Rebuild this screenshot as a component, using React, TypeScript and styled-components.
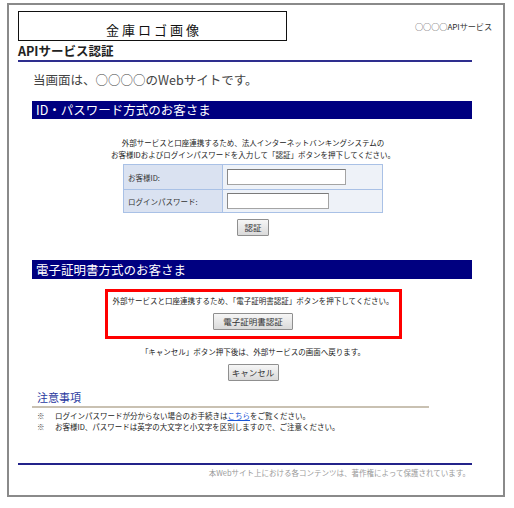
import React from 'react';
import styled, { createGlobalStyle } from 'styled-components';

const GlobalStyle = createGlobalStyle`
  html, body {
    margin: 0;
    padding: 0;
    background: #ffffff;
  }
  body {
    font-family: "Noto Sans CJK JP", "Liberation Sans", sans-serif;
    color: #222;
  }
`;

const App = () => {
  return (
    <>
      <GlobalStyle />
      <Frame>
        <TopRow>
          <LogoBox>金庫ロゴ画像</LogoBox>
          <ServiceName>○○○○APIサービス</ServiceName>
        </TopRow>
        <Main>
          <PageTitle>APIサービス認証</PageTitle>
          <Intro>当画面は、○○○○のWebサイトです。</Intro>

          <Section>
            <SectionBar>ID・パスワード方式のお客さま</SectionBar>
            <Body>
              <SmallText $top={18}>
                外部サービスと口座連携するため、法人インターネットバンキングシステムの
                <br />
                お客様IDおよびログインパスワードを入力して「認証」ボタンを押下してください。
              </SmallText>
              <LoginTable>
                <tbody>
                  <tr>
                    <LabelCell $h={25}>お客様ID:</LabelCell>
                    <InputCell>
                      <TextInput type="text" $w={119} />
                    </InputCell>
                  </tr>
                  <tr>
                    <LabelCell $h={23}>ログインパスワード:</LabelCell>
                    <InputCell>
                      <TextInput type="password" $w={102} />
                    </InputCell>
                  </tr>
                </tbody>
              </LoginTable>
              <Button $w={32} $top={6}>認証</Button>
            </Body>
          </Section>

          <Section $top={24}>
            <SectionBar $h={19}>電子証明書方式のお客さま</SectionBar>
            <Body>
              <Highlight>
                <SmallText>
                  外部サービスと口座連携するため、「電子証明書認証」ボタンを押下してください。
                </SmallText>
                <Button $w={80} $top={6}>電子証明書認証</Button>
              </Highlight>
              <SmallText $top={7}>
                「キャンセル」ボタン押下後は、外部サービスの画面へ戻ります。
              </SmallText>
              <Button $w={51} $top={6}>キャンセル</Button>
            </Body>
          </Section>

          <Notice>
            <NoticeTitle>注意事項</NoticeTitle>
            <NoteList>
              <NoteItem>
                <Mark>{'\u203B\uFE0E'}</Mark>
                <span>
                  ログインパスワードが分からない場合のお手続きは<NoteLink href="#">こちら</NoteLink>をご覧ください。
                </span>
              </NoteItem>
              <NoteItem>
                <Mark>{'\u203B\uFE0E'}</Mark>
                <span>お客様ID、パスワードは英字の大文字と小文字を区別しますので、ご注意ください。</span>
              </NoteItem>
            </NoteList>
          </Notice>

          <Footer>本Webサイト上における各コンテンツは、著作権によって保護されています。</Footer>
        </Main>
      </Frame>
    </>
  );
};

export default App;

const Frame = styled.div`
  box-sizing: border-box;
  width: 498px;
  height: 494px;
  margin: 3px 0 0 7px;
  border: 2px solid #8a8a8a;
  padding: 6px 11px 0 9px;
`;

const TopRow = styled.div`
  display: flex;
  justify-content: space-between;
  align-items: center;
`;

const LogoBox = styled.div`
  box-sizing: border-box;
  width: 269px;
  height: 30px;
  border: 1px solid #111;
  display: flex;
  align-items: center;
  justify-content: center;
  padding-top: 6px;
  padding-left: 3px;
  font-size: 13px;
  letter-spacing: 3px;
  color: #111;
`;

const ServiceName = styled.div`
  font-size: 8.2px;
  color: #333;
  letter-spacing: -0.1px;
`;

const Main = styled.div`
  width: 454px;
`;

const PageTitle = styled.div`
  margin-top: 1px;
  height: 18px;
  line-height: 18px;
  font-size: 12.5px;
  font-weight: bold;
  color: #222;
  border-bottom: 2px solid #2e2e8e;
`;

const Intro = styled.div`
  margin-top: 10px;
  padding-left: 15px;
  line-height: 16px;
  font-size: 12.5px;
  color: #444;
`;

const Section = styled.section<{ $top?: number }>`
  margin-top: ${({ $top }) => $top ?? 13}px;
  margin-left: 14px;
  width: 440px;
`;

const SectionBar = styled.div<{ $h?: number }>`
  height: ${({ $h }) => $h ?? 18}px;
  line-height: ${({ $h }) => $h ?? 18}px;
  background: #000080;
  color: #ffffff;
  font-size: 12.5px;
  padding-left: 4px;
`;

const Body = styled.div`
  display: flex;
  flex-direction: column;
  align-items: center;
  padding-left: 2px;
`;

const SmallText = styled.p<{ $top?: number }>`
  margin: ${({ $top }) => $top ?? 0}px 0 0;
  font-size: 7.5px;
  line-height: 12px;
  text-align: center;
  color: #222;
  white-space: nowrap;
`;

const LoginTable = styled.table`
  margin-top: 3px;
  width: 260px;
  border-collapse: collapse;
  border: 1px solid #a9c1e6;
`;

const LabelCell = styled.td<{ $h: number }>`
  box-sizing: border-box;
  width: 99px;
  height: ${({ $h }) => $h}px;
  padding: 0 0 0 4px;
  background: #dae2f1;
  border: 1px solid #a9c1e6;
  font-size: 7.5px;
  color: #333;
`;

const InputCell = styled.td`
  padding: 0 0 0 4px;
  background: #eef2f8;
  border: 1px solid #a9c1e6;
`;

const TextInput = styled.input<{ $w: number }>`
  display: block;
  box-sizing: border-box;
  width: ${({ $w }) => $w}px;
  height: 16px;
  margin: 0;
  padding: 0 2px;
  background: #ffffff;
  border: 1px solid #a4a4a4;
  border-top-color: #7a7a7a;
  border-left-color: #8a8a8a;
  outline: none;
`;

const Button = styled.button<{ $w: number; $top?: number }>`
  box-sizing: border-box;
  width: ${({ $w }) => $w}px;
  height: 17px;
  margin-top: ${({ $top }) => $top ?? 0}px;
  padding: 0;
  background: linear-gradient(#f6f6f6, #dadada);
  border: 1px solid #8f8f8f;
  border-radius: 1px;
  font-family: "Noto Sans CJK JP", sans-serif;
  font-size: 8.5px;
  color: #333;
  line-height: 15px;
`;

const Highlight = styled.div`
  box-sizing: border-box;
  margin-top: 10px;
  width: 297px;
  height: 50px;
  border: 3px solid #ff0000;
  padding-top: 3px;
  display: flex;
  flex-direction: column;
  align-items: center;
`;

const Notice = styled.div`
  margin-top: 9px;
  margin-left: 14px;
  width: 397px;
`;

const NoticeTitle = styled.div`
  line-height: 14px;
  padding: 0 0 2px 5px;
  font-size: 11px;
  color: #2a3aa0;
  border-bottom: 2px solid #c9c1b2;
`;

const NoteList = styled.ul`
  list-style: none;
  margin: 2px 0 0;
  padding: 0 0 0 5px;
`;

const NoteItem = styled.li`
  display: flex;
  line-height: 11px;
  font-size: 7.5px;
  color: #222;
  white-space: nowrap;
`;

const Mark = styled.span`
  width: 18px;
  flex-shrink: 0;
  font-family: "Noto Sans CJK JP", sans-serif;
  color: #444;
`;

const NoteLink = styled.a`
  color: #1a56d6;
  text-decoration: underline;
`;

const Footer = styled.div`
  margin-top: 31px;
  padding: 3px 2px 0 0;
  border-top: 2px solid #23238a;
  line-height: 10px;
  font-size: 7.5px;
  color: #9a9a9a;
  text-align: right;
`;
